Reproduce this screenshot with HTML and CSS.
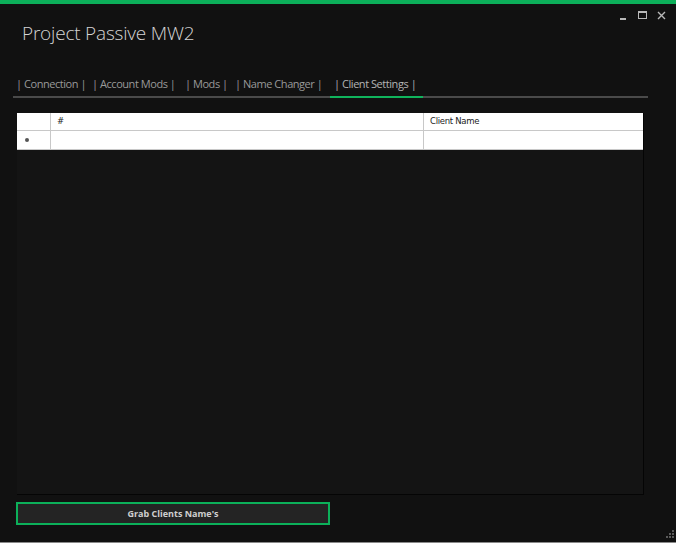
FILE: index.html
```html
<!DOCTYPE html>
<html>
<head>
<meta charset="utf-8">
<link rel="stylesheet" href="styles.css">
</head>
<body>
<div class="window">
  <div class="accent"></div>
  <div class="header">
    <h1 class="title">Project Passive MW2</h1>
    <div class="controls">
      <span class="ctl min"></span>
      <span class="ctl max"></span>
      <span class="ctl close">
        <svg width="9" height="9" viewBox="0 0 9 9"><path d="M1 1L8 8M8 1L1 8" stroke="#b8b8b8" stroke-width="1.4" fill="none"/></svg>
      </span>
    </div>
  </div>
  <div class="tabs">
    <div class="tab t1">| Connection |</div>
    <div class="tab t2">| Account Mods |</div>
    <div class="tab t3">| Mods |</div>
    <div class="tab t4">| Name Changer |</div>
    <div class="tab t5 active">| Client Settings |</div>
  </div>
  <div class="grid">
    <div class="row head">
      <div class="cell rh"></div>
      <div class="cell c1">#</div>
      <div class="cell c2">Client Name</div>
    </div>
    <div class="row">
      <div class="cell rh"><span class="dot"></span></div>
      <div class="cell c1"></div>
      <div class="cell c2"></div>
    </div>
  </div>
  <div class="footer">
    <button class="btn">Grab Clients Name's</button>
  </div>
  <div class="grip">
    <svg width="10" height="10" viewBox="0 0 10 10" fill="#5a5a5a">
      <rect x="8" y="0" width="2" height="2"/>
      <rect x="5" y="3" width="2" height="2"/><rect x="8" y="3" width="2" height="2"/>
      <rect x="2" y="6" width="2" height="2"/><rect x="5" y="6" width="2" height="2"/><rect x="8" y="6" width="2" height="2"/>
    </svg>
  </div>
  <div class="bottomline"></div>
</div>
</body>
</html>
```
FILE: styles.css
```css
html, body {
  margin: 0;
  padding: 0;
  background: #111111;
}
.window {
  position: relative;
  width: 676px;
  height: 543px;
  background: #111111;
  font-family: "Open Sans", "Liberation Sans", sans-serif;
  overflow: hidden;
  display: flex;
  flex-direction: column;
}
.accent {
  height: 4px;
  background: #0cb05a;
  flex: none;
}
.header {
  display: flex;
  justify-content: space-between;
  align-items: flex-start;
  height: 56px;
  flex: none;
}
.title {
  margin: 16px 0 0 22px;
  font-size: 19px;
  font-weight: 300;
  color: #d4d4d4;
  line-height: 26px;
  letter-spacing: -0.2px;
}
.controls {
  display: flex;
  align-items: center;
  gap: 10px;
  margin: 5px 10px 0 0;
  height: 12px;
}
.ctl {
  display: block;
  width: 9px;
  height: 9px;
  box-sizing: border-box;
}
.min {
  height: 9px;
  border-bottom: 2px solid #b8b8b8;
  width: 6px;
  margin-right: 2px;
}
.max {
  border: 1.5px solid #b8b8b8;
  border-top-width: 2.5px;
  width: 9px;
  height: 8px;
}
.close svg { display: block; }
.tabs {
  display: flex;
  margin: 12px 0 0 13px;
  width: 635px;
  border-bottom: 2px solid #4a4a4a;
  height: 24px;
  flex: none;
}
.tab {
  box-sizing: border-box;
  font-size: 11px;
  color: #999999;
  line-height: 16px;
  padding: 4px 0 0 3px;
  white-space: nowrap;
  letter-spacing: -0.45px;
  flex: none;
}
.tab.t1 { width: 76px; }
.tab.t2 { width: 93px; }
.tab.t3 { width: 50px; }
.tab.t4 { width: 98px; }
.tab.t5 { width: 93px; }
.tab.active {
  color: #b4b4b4;
  border-bottom: 2px solid #10b35c;
  margin-bottom: -2px;
  padding-left: 4px;
}
.grid {
  margin: 15px 0 0 17px;
  width: 627px;
  height: 382px;
  box-sizing: border-box;
  background: #141414;
  border-right: 1px solid #050505;
  border-bottom: 1px solid #050505;
  flex: none;
}
.row {
  display: flex;
  height: 18px;
  background: #ffffff;
  border-bottom: 1px solid #c8c8c8;
  box-sizing: border-box;
}
.row.head { height: 18px; }
.row + .row { height: 19px; }
.cell {
  box-sizing: border-box;
  border-right: 1px solid #c8c8c8;
  font-family: "DejaVu Sans", "Liberation Sans", sans-serif;
  font-size: 8.5px;
  color: #222;
  line-height: 17px;
  padding-left: 6px;
  letter-spacing: -0.3px;
}
.cell.rh { width: 34px; position: relative; }
.cell.c1 { width: 373px; }
.cell.c2 { width: 219px; border-right: none; }
.dot {
  position: absolute;
  left: 8px;
  top: 7px;
  width: 4px;
  height: 4px;
  border-radius: 50%;
  background: #555;
}
.footer {
  margin: 7px 0 0 16px;
  flex: none;
}
.btn {
  display: block;
  width: 314px;
  height: 23px;
  background: #242424;
  border: 2px solid #0cb05a;
  color: #cfcfcf;
  font-family: "Open Sans", "Liberation Sans", sans-serif;
  font-weight: 700;
  font-size: 9px;
  padding: 0;
  margin: 0;
  cursor: pointer;
}
.grip {
  position: absolute;
  right: 2px;
  bottom: 3px;
  width: 10px;
  height: 10px;
}
.grip svg { display: block; }
.bottomline {
  position: absolute;
  left: 0;
  right: 0;
  bottom: 0;
  height: 1px;
  background: #8a8a8a;
}
```
